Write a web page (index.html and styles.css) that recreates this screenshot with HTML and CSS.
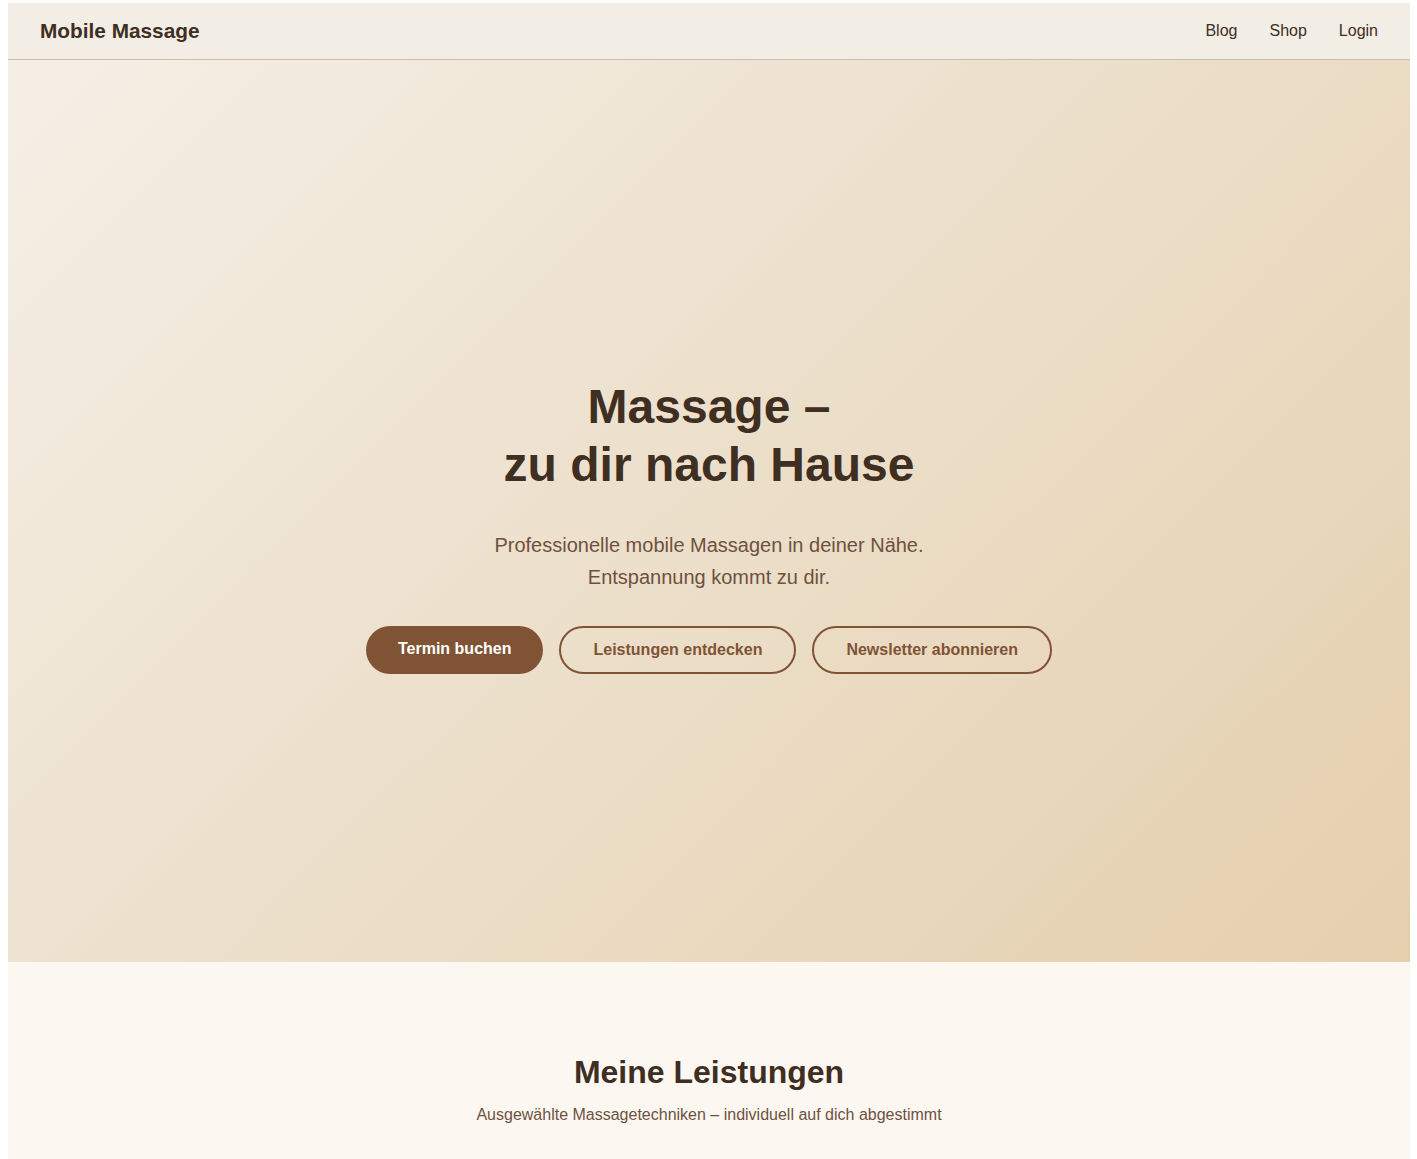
FILE: index.html
```html
<!DOCTYPE html>
<html lang="de">
<head>
    <meta charset="UTF-8">
    <meta name="viewport" content="width=device-width, initial-scale=1.0">
    <title>Mobile Massage</title>
    <link rel="stylesheet" href="styles.css">
</head>
<body>
    <!-- Kopfzeile -->
    <header class="site-header">
        <a class="logo" href="#">Mobile Massage</a>
        <nav class="nav">
            <a href="#">Blog</a>
            <a href="#">Shop</a>
            <a href="#">Login</a>
        </nav>
    </header>

    <!-- Hero-Bereich -->
    <section class="hero">
        <div class="hero-inner">
            <h1>Massage –<br>zu dir nach Hause</h1>
            <p class="hero-text">Professionelle mobile Massagen in deiner Nähe.<br>Entspannung kommt zu dir.</p>
            <div class="hero-buttons">
                <a class="btn btn-primary" href="#">Termin buchen</a>
                <a class="btn btn-outline" href="#">Leistungen entdecken</a>
                <a class="btn btn-outline" href="#">Newsletter abonnieren</a>
            </div>
        </div>
    </section>

    <!-- Leistungen -->
    <section class="services">
        <h2>Meine Leistungen</h2>
        <p class="services-sub">Ausgewählte Massagetechniken – individuell auf dich abgestimmt</p>
    </section>
</body>
</html>
```

FILE: styles.css
```css
body {
    margin: 0;
    padding: 3px 7px 0 8px;
    font-family: "Liberation Sans", Arial, Helvetica, sans-serif;
    background-color: #ffffff;
    color: #3f2e22;
}

a {
    text-decoration: none;
    color: inherit;
}

/* Kopfzeile */
.site-header {
    display: flex;
    align-items: center;
    justify-content: space-between;
    height: 56px;
    padding: 0 32px;
    background-color: #f2ede5;
    border-bottom: 1px solid #cbbdab;
}

.logo {
    font-size: 20.8px;
    font-weight: 700;
    color: #3f2e22;
}

.nav {
    display: flex;
    gap: 32px;
}

.nav a {
    font-size: 16px;
    color: #3f2e22;
}

/* Hero */
.hero {
    display: flex;
    align-items: center;
    justify-content: center;
    min-height: 902px;
    box-sizing: border-box;
    padding-top: 30px;
    background: linear-gradient(135deg, #f5efe6 0%, #ecdfca 50%, #e5cfad 100%);
    text-align: center;
}

.hero h1 {
    margin: 0;
    font-size: 48px;
    line-height: 1.2;
    font-weight: 700;
    color: #3f2e22;
}

.hero-text {
    margin: 35px 0 0;
    font-size: 20px;
    line-height: 32px;
    color: #6e5141;
}

.hero-buttons {
    display: flex;
    justify-content: center;
    gap: 16px;
    margin-top: 33px;
}

.btn {
    display: inline-flex;
    align-items: center;
    height: 48px;
    box-sizing: border-box;
    padding: 0 32px;
    border-radius: 24px;
    font-size: 16px;
    font-weight: 700;
}

.btn-primary {
    background-color: #805335;
    color: #ffffff;
    padding-bottom: 2px;
}

.btn-outline {
    border: 2px solid #805335;
    color: #805335;
}

/* Leistungen */
.services {
    background-color: #fcf8f1;
    padding: 91px 0 40px;
    text-align: center;
}

.services h2 {
    margin: 0;
    font-size: 32px;
    line-height: 1.2;
    font-weight: 700;
    color: #3f2e22;
}

.services-sub {
    margin: 15px 0 0;
    font-size: 16px;
    color: #6e5141;
}
```
